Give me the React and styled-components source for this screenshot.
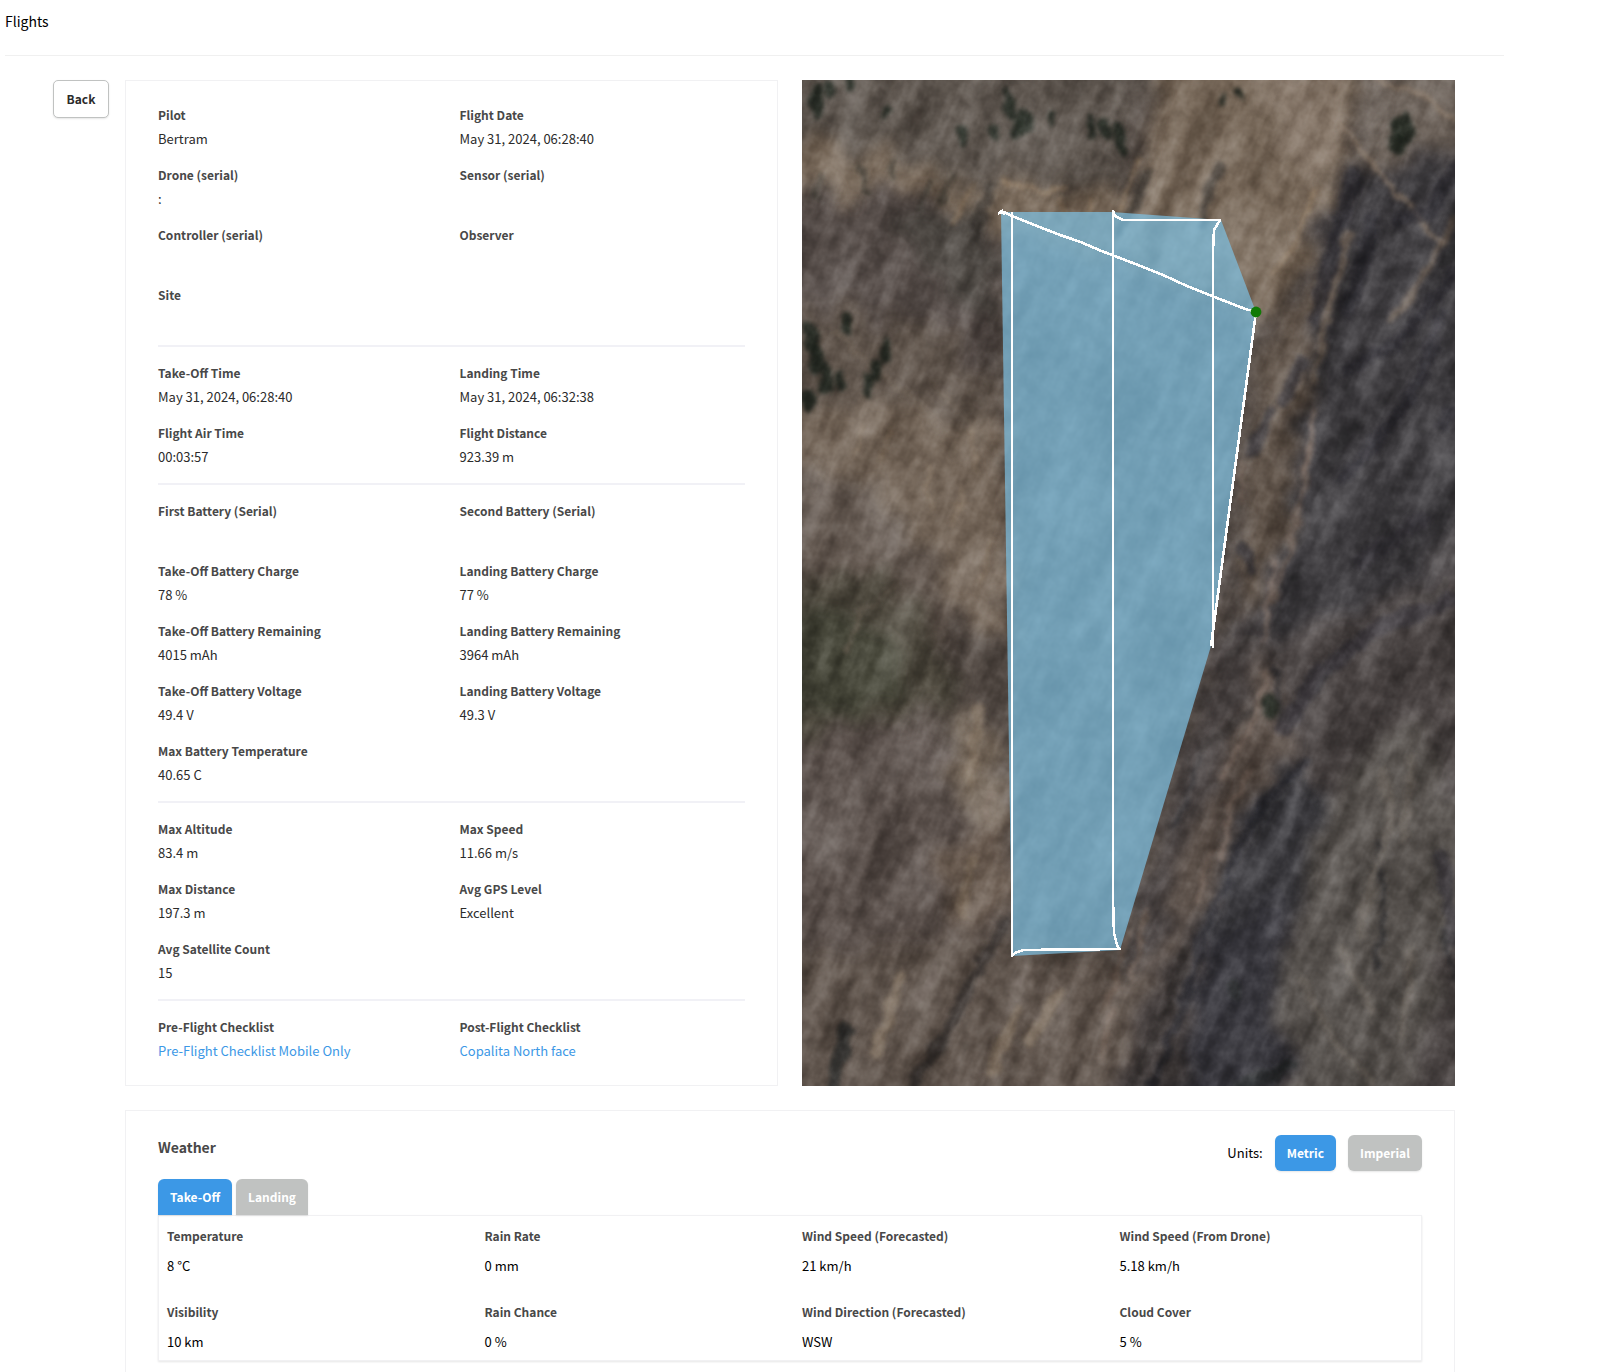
import React, { useState } from 'react';
import styled, { createGlobalStyle } from 'styled-components';

const GlobalStyle = createGlobalStyle`
  * {
    box-sizing: border-box;
  }
  body {
    margin: 0;
    background: #fff;
    color: #000;
    font-family: 'Noto Sans CJK SC', 'Noto Sans', sans-serif;
    font-size: 13px;
    line-height: 24px;
  }
`;

const Page = styled.div`
  padding: 0 110px 0 5px;
`;

const Header = styled.header`
  height: 56px;
  padding-top: 9px;
  border-bottom: 1px solid #f0f0f0;
`;

const PageTitle = styled.h1`
  margin: 0;
  font-size: 14px;
  line-height: 24px;
  font-weight: 400;
`;

const Main = styled.main`
  padding: 24px 49px 0 48px;
  display: flex;
  align-items: flex-start;
  gap: 16px;
`;

const BackButton = styled.button`
  flex: none;
  width: 56px;
  height: 38px;
  padding: 0;
  border: 1px solid #c0c2c1;
  border-radius: 5px;
  background: #fff;
  box-shadow: 0 1px 2px rgba(0, 0, 0, 0.1);
  color: #2b2b2b;
  font: inherit;
  font-size: 12px;
  font-weight: 700;
  cursor: pointer;
`;

const Content = styled.div`
  flex: 1;
  min-width: 0;
  display: grid;
  grid-template-columns: 1fr 1fr;
  gap: 24px;
`;

const Card = styled.section`
  border: 1px solid #f1f1f3;
  background: #fff;
  padding: 22px 32px;
`;

const WeatherCard = styled(Card)`
  grid-column: 1 / -1;
  padding: 24px 32px;
`;

const MapCard = styled.div`
  min-width: 0;
  overflow: hidden;
  background: #5c534d;
`;

const MapSvg = styled.svg`
  display: block;
  width: 100%;
  height: 100%;
`;

const InfoGroup = styled.dl`
  margin: 0;
  display: grid;
  grid-template-columns: 1fr 1fr;
  gap: 12px 16px;

  &:not(:last-child) {
    padding-bottom: 14px;
    margin-bottom: 14px;
    border-bottom: 2px solid #f1f1f6;
  }
`;

const InfoLabel = styled.dt`
  color: #484848;
  font-size: 12px;
  font-weight: 700;
`;

const InfoValue = styled.dd`
  margin: 0;
  min-height: 24px;
  color: #2b2b2b;
`;

const ChecklistLink = styled.a`
  color: #3c98e6;
  text-decoration: none;
`;

const WeatherHeader = styled.div`
  display: flex;
  align-items: flex-start;
  justify-content: space-between;
`;

const WeatherTitle = styled.h2`
  margin: 0;
  font-size: 14px;
  line-height: 24px;
  font-weight: 700;
  color: #484848;
`;

const Units = styled.div`
  display: flex;
  align-items: center;
  gap: 12px;
`;

const UnitButton = styled.button`
  height: 36px;
  padding: 0 12px;
  border: 0;
  border-radius: 6px;
  background: ${(props) => (props.$active ? '#3c98e6' : '#c0c2c1')};
  box-shadow: 0 1px 2px rgba(0, 0, 0, 0.1);
  color: #fff;
  font: inherit;
  font-size: 12px;
  font-weight: 700;
  cursor: pointer;
`;

const Tabs = styled.div`
  margin-top: 8px;
  display: flex;
  gap: 4px;
`;

const TabButton = styled(UnitButton)`
  border-radius: 6px 6px 0 0;
`;

const WeatherGrid = styled.dl`
  margin: 0;
  padding: 6px 0 2px 8px;
  display: grid;
  grid-template-columns: repeat(4, 1fr);
  gap: 16px;
  border: 1px solid #f1f1f3;
  box-shadow: 0 1px 2px rgba(0, 0, 0, 0.1);
`;

const WeatherLabel = styled.dt`
  font-size: 12px;
  line-height: 28px;
  font-weight: 700;
  color: #484848;
`;

const WeatherValue = styled.dd`
  margin: 0;
  line-height: 32px;
`;

const infoGroups = [
  [
    ['Pilot', 'Bertram'],
    ['Flight Date', 'May 31, 2024, 06:28:40'],
    ['Drone (serial)', ':'],
    ['Sensor (serial)', ''],
    ['Controller (serial)', ''],
    ['Observer', ''],
    ['Site', ''],
  ],
  [
    ['Take-Off Time', 'May 31, 2024, 06:28:40'],
    ['Landing Time', 'May 31, 2024, 06:32:38'],
    ['Flight Air Time', '00:03:57'],
    ['Flight Distance', '923.39 m'],
  ],
  [
    ['First Battery (Serial)', ''],
    ['Second Battery (Serial)', ''],
    ['Take-Off Battery Charge', '78 %'],
    ['Landing Battery Charge', '77 %'],
    ['Take-Off Battery Remaining', '4015 mAh'],
    ['Landing Battery Remaining', '3964 mAh'],
    ['Take-Off Battery Voltage', '49.4 V'],
    ['Landing Battery Voltage', '49.3 V'],
    ['Max Battery Temperature', '40.65 C'],
  ],
  [
    ['Max Altitude', '83.4 m'],
    ['Max Speed', '11.66 m/s'],
    ['Max Distance', '197.3 m'],
    ['Avg GPS Level', 'Excellent'],
    ['Avg Satellite Count', '15'],
  ],
  [
    ['Pre-Flight Checklist', 'Pre-Flight Checklist Mobile Only', '#pre-flight'],
    ['Post-Flight Checklist', 'Copalita North face', '#post-flight'],
  ],
];

const weather = [
  ['Temperature', '8 °C'],
  ['Rain Rate', '0 mm'],
  ['Wind Speed (Forecasted)', '21 km/h'],
  ['Wind Speed (From Drone)', '5.18 km/h'],
  ['Visibility', '10 km'],
  ['Rain Chance', '0 %'],
  ['Wind Direction (Forecasted)', 'WSW'],
  ['Cloud Cover', '5 %'],
];

// large soft areas of ground: [colour, path]
const ground = [
  ['#5f5750', 'M-20 -20H340L310 130L200 110L90 90L-20 60Z'],
  ['#7a6b5c', 'M-20 55L90 70L150 100L240 105L330 110L345 90L340 -20H560L540 90L500 180L470 240L200 150L90 125L-20 100Z'],
  ['#8b7c6e', 'M450 -20H550L540 60L510 110L480 60Z'],
  ['#6a6058', 'M560 -20H673V90L600 140L560 70Z'],
  ['#584f4b', 'M-20 120L120 110L200 150V320L120 260L-20 220Z'],
  ['#4f4a45', 'M100 140L170 130L195 200V240L150 220Z'],
  ['#62574e', 'M-20 220L110 240L200 300V420L100 380L-20 400Z'],
  ['#75675a', 'M-20 335L60 315L150 340L210 350V560L130 520L60 420L-20 380Z'],
  ['#645951', 'M-20 400L60 400L130 470L160 560L80 560L-20 540Z'],
  ['#504b40', 'M-20 505L70 490L130 545L145 610L90 665L-20 670Z'],
  ['#47473a', 'M-20 545L50 525L95 560L100 610L50 635L-20 630Z'],
  ['#5b514c', 'M-20 660L100 640L210 700V1026H-20Z'],
  ['#74675a', 'M150 630L170 610L200 660L205 760L170 740L145 700Z'],
  ['#6b5d52', 'M130 770L205 740V830L160 850Z'],
  ['#474344', 'M545 80L673 70V700H440L420 560L445 330L500 200Z'],
  ['#3f3d40', 'M560 90L673 90V420L560 560L470 560L500 330Z'],
  ['#60544a', 'M470 250L530 190L505 330L480 480L430 540L445 330Z'],
  ['#4a4443', 'M410 570L673 500V1026H250L320 870Z'],
  ['#5c514a', 'M420 690L455 600L470 560L480 640L500 700L430 780L370 880L330 930Z'],
  ['#3a393d', 'M440 720L490 690L530 720L520 800L470 850L400 870Z'],
  ['#38373d', 'M395 870L480 820L480 1026H370Z'],
  ['#58534f', 'M545 680L620 650L673 800L600 1026L490 1026L480 880Z'],
  ['#61564e', 'M-20 880L190 850L310 880L350 900L300 1026H-20Z'],
];

// thin darker and lighter marks: ridges, gullies and rocks
const streaks = [
  ['#37332f', 9, 'M346 92L334 120L318 152M418 85L408 110L398 145M190 105L172 155'],
  ['#3a3731', 5, 'M60 85L66 112M92 80L88 96M128 100L120 130M150 95L140 118M22 92L14 118'],
  ['#9b866e', 4, 'M170 105L160 125L152 145M200 100L240 112L262 108M336 80L318 128M515 110L492 160L470 195M290 120L285 140M256 118L262 138'],
  ['#8f7e6d', 5, 'M538 45L580 95L610 130L640 165M573 0L620 15L653 40'],
  ['#2c2b30', 16, 'M552 95L540 140L512 240M653 90L630 130L600 140M570 140L560 190L545 230'],
  ['#29282e', 12, 'M500 280L482 320M470 330L450 370M442 470L450 490M640 230L620 300L575 360L540 400M653 330L640 345M653 190L600 260L545 290'],
  ['#75665a', 7, 'M546 155L534 200L520 260L512 300M653 140L620 200L590 240'],
  ['#6f6055', 6, 'M510 330L505 390L490 460L470 520M440 380L440 420'],
  ['#85746a', 5, 'M510 335L505 390M472 480L462 560M466 592L455 640L440 660L420 700M450 690L430 720L420 780M410 770L395 820'],
  ['#26262c', 9, 'M505 680L465 720L440 760L425 800L400 860L380 930L350 1006'],
  ['#2a292c', 5, 'M398 675L385 720L370 745M575 760L582 830L575 890M474 590L478 640M530 590L515 612M500 700L515 730M640 850L653 900'],
  ['#332f2d', 10, 'M205 840L170 900L140 960L110 1006M385 870L360 940L330 1006M450 630L400 670'],
  ['#8a7a69', 11, 'M97 895L88 930L75 975M178 625L172 660L168 700M255 910L245 935L228 960M170 780L160 830M215 930L190 990'],
  ['#26292a', 14, 'M45 950L30 1006M490 985L440 1006M430 905L434 912'],
  ['#77675b', 5, 'M325 850L315 900L300 930M310 930L300 980M345 830L330 900M190 715L182 740'],
  ['#6f6861', 8, 'M580 690L590 740L570 800L560 850M610 680L600 760M500 900L530 960L570 1000M540 870L570 930M610 870L600 960'],
  ['#37343a', 16, 'M653 520L580 545L520 590L480 650M640 780L653 860M560 480L620 440'],
  ['#726559', 3, 'M45 570L60 530L95 505M30 250L110 320L160 380M130 300L200 380'],
  ['#8d7c69', 4, 'M130 385L122 410L132 430M60 345L55 375M160 410L150 445M190 460L180 500M90 350L80 380M170 350L175 390'],
];

// clusters of trees and their shadows: [x, y, rx, ry]
const trees = [
  [15, 22, 7, 20], [28, 8, 6, 10], [48, 4, 4, 8], [84, 32, 4, 6],
  [160, 54, 6, 12], [192, 52, 5, 9], [207, 26, 6, 16], [222, 42, 11, 12],
  [212, 50, 5, 10], [250, 38, 4, 9], [290, 48, 4, 14], [303, 50, 6, 12],
  [316, 56, 6, 14], [320, 70, 5, 7], [422, 18, 3, 7], [437, 15, 3, 7],
  [602, 48, 11, 14], [594, 64, 9, 10], [8, 258, 8, 16], [14, 280, 8, 15],
  [44, 242, 6, 13], [84, 272, 5, 12], [74, 288, 6, 12], [38, 300, 5, 12],
  [66, 306, 5, 15], [24, 300, 6, 16], [6, 318, 8, 12], [468, 625, 6, 14],
];

const flownArea = 'M199 132H310L419 140L454 232L409 566L318 870L210 876Z';

const flownPath =
  'M454 231L446 230L433 225L410 216L385 206L361 195L336 185L310 175L297 170L281 163' +
  'L270 159L258 155L235 146L210 136L204 133L198 132M196 134L201 130M203 131L202 135' +
  'M210 132V876L213 873L221 870L318 869M318 870L315 865L312 853L311 820V320L311 131' +
  'L313 136L321 140H418L412 150L411 170V568M409 566L454 232';

function FlightMap() {
  return (
    <MapSvg
      viewBox="0 0 653 1006"
      preserveAspectRatio="xMidYMid slice"
      role="img"
      aria-label="Flight path"
    >
      <defs>
        <filter id="soft" colorInterpolationFilters="sRGB">
          <feTurbulence type="fractalNoise" baseFrequency="0.03" numOctaves="4" seed="4" />
          <feDisplacementMap
            in="SourceGraphic"
            scale="60"
            xChannelSelector="R"
            yChannelSelector="G"
            result="rough"
          />
          <feGaussianBlur in="rough" stdDeviation="7" />
        </filter>
        <filter id="ragged" colorInterpolationFilters="sRGB">
          <feTurbulence type="fractalNoise" baseFrequency="0.06" numOctaves="2" seed="9" />
          <feDisplacementMap
            in="SourceGraphic"
            scale="14"
            xChannelSelector="R"
            yChannelSelector="G"
            result="rough"
          />
          <feGaussianBlur in="rough" stdDeviation="2" />
        </filter>
        <filter id="relief" x="0" y="0" width="100%" height="100%" colorInterpolationFilters="sRGB">
          <feTurbulence type="fractalNoise" baseFrequency="0.04 0.01" numOctaves="4" seed="12" />
          <feColorMatrix values="0 0 0 1.8 -0.4  0 0 0 1.8 -0.4  0 0 0 1.8 -0.4  0 0 0 0 1" />
        </filter>
        <filter id="grain" x="0" y="0" width="100%" height="100%" colorInterpolationFilters="sRGB">
          <feTurbulence type="fractalNoise" baseFrequency="0.07" numOctaves="3" seed="3" />
          <feColorMatrix values="0 0 0 1.6 -0.3  0 0 0 1.6 -0.3  0 0 0 1.6 -0.3  0 0 0 0 1" />
        </filter>
        <clipPath id="bounds">
          <rect width="653" height="1006" />
        </clipPath>
      </defs>

      <g clipPath="url(#bounds)">
        <rect width="653" height="1006" fill="#5a514b" />
        <g filter="url(#soft)">
          {ground.map(([fill, d]) => (
            <path key={d} fill={fill} d={d} />
          ))}
        </g>
        <g filter="url(#ragged)">
          {streaks.map(([stroke, width, d]) => (
            <path
              key={d}
              d={d}
              fill="none"
              stroke={stroke}
              strokeWidth={width}
              strokeLinecap="round"
              strokeLinejoin="round"
              opacity="0.7"
            />
          ))}
          {trees.map(([cx, cy, rx, ry]) => (
            <ellipse
              key={`${cx}-${cy}`}
              cx={cx}
              cy={cy}
              rx={rx}
              ry={ry}
              fill="#20261f"
              opacity="0.9"
            />
          ))}
        </g>
        <g style={{ mixBlendMode: 'soft-light' }} opacity="0.38">
          <rect
            x="-500"
            y="-400"
            width="1700"
            height="1800"
            transform="rotate(24 326 503)"
            filter="url(#relief)"
          />
        </g>
        <g style={{ mixBlendMode: 'soft-light' }} opacity="0.22">
          <rect width="653" height="1006" filter="url(#grain)" />
        </g>
      </g>

      <path d={flownArea} fill="#7dc1e2" fillOpacity="0.7" />
      <path
        d={flownPath}
        fill="none"
        stroke="#fff"
        strokeWidth="2.6"
        strokeLinejoin="round"
        shapeRendering="crispEdges"
      />
      <circle cx="454" cy="232" r="5.4" fill="#117a06" />
    </MapSvg>
  );
}

function InfoItem(props) {
  const { label, value, href } = props;
  return (
    <div>
      <InfoLabel>{label}</InfoLabel>
      <InfoValue>
        {href ? <ChecklistLink href={href}>{value}</ChecklistLink> : value}
      </InfoValue>
    </div>
  );
}

function WeatherPanel() {
  const [units, setUnits] = useState('Metric');
  const [tab, setTab] = useState('Take-Off');

  return (
    <WeatherCard>
      <WeatherHeader>
        <WeatherTitle>Weather</WeatherTitle>
        <Units>
          <span>Units:</span>
          {['Metric', 'Imperial'].map((name) => (
            <UnitButton
              key={name}
              type="button"
              $active={units === name}
              aria-pressed={units === name}
              onClick={() => setUnits(name)}
            >
              {name}
            </UnitButton>
          ))}
        </Units>
      </WeatherHeader>
      <Tabs role="tablist">
        {['Take-Off', 'Landing'].map((name) => (
          <TabButton
            key={name}
            type="button"
            role="tab"
            $active={tab === name}
            aria-selected={tab === name}
            onClick={() => setTab(name)}
          >
            {name}
          </TabButton>
        ))}
      </Tabs>
      <WeatherGrid>
        {weather.map(([label, value]) => (
          <div key={label}>
            <WeatherLabel>{label}</WeatherLabel>
            <WeatherValue>{value}</WeatherValue>
          </div>
        ))}
      </WeatherGrid>
    </WeatherCard>
  );
}

function App() {
  return (
    <Page>
      <GlobalStyle />
      <Header>
        <PageTitle>Flights</PageTitle>
      </Header>
      <Main>
        <BackButton type="button">Back</BackButton>
        <Content>
          <Card>
            {infoGroups.map((items) => (
              <InfoGroup key={items[0][0]}>
                {items.map(([label, value, href]) => (
                  <InfoItem key={label} label={label} value={value} href={href} />
                ))}
              </InfoGroup>
            ))}
          </Card>
          <MapCard>
            <FlightMap />
          </MapCard>
          <WeatherPanel />
        </Content>
      </Main>
    </Page>
  );
}

export default App;
